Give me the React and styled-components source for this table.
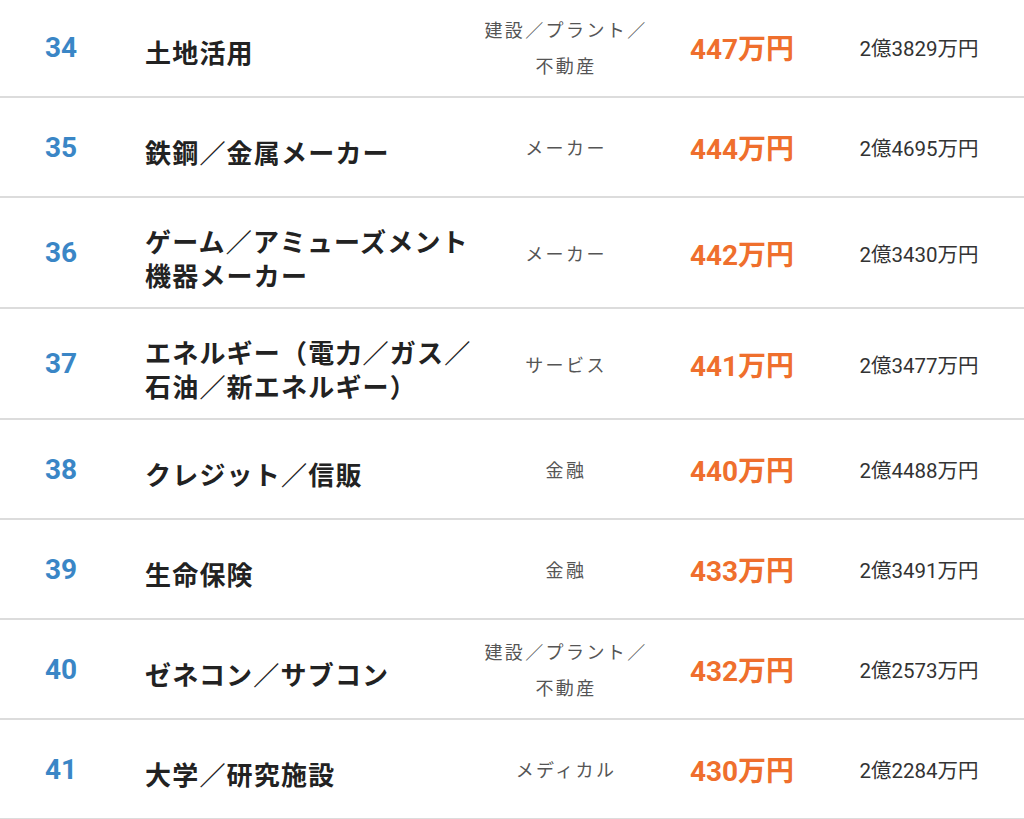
import styled, { createGlobalStyle } from 'styled-components';

const GlobalStyle = createGlobalStyle`
  html, body {
    margin: 0;
    padding: 0;
    background: #fff;
  }
  body {
    font-family: Roboto, "Noto Sans CJK JP", sans-serif;
    color: #222;
  }
`;

const Table = styled.div`
  width: 1024px;
  margin-top: -2px;
`;

const Row = styled.div`
  display: grid;
  grid-template-columns: 122px 358px 172px 180px 174px 18px;
  align-items: center;
  box-sizing: border-box;
  min-height: 100px;
  border-bottom: 2px solid #dcdcdc;
`;

const Rank = styled.div`
  text-align: center;
  font-family: Roboto, "Noto Sans CJK JP", sans-serif;
  font-size: 28px;
  font-weight: 700;
  color: #3a86c6;
`;

const Name = styled.div`
  padding: 25.5px 0 15.5px 23px;
  font-family: "Noto Sans CJK JP", sans-serif;
  font-size: 26px;
  line-height: 34px;
  font-weight: 700;
  letter-spacing: 1.2px;
  color: #222;
`;

const Category = styled.div`
  text-align: center;
  font-family: "Noto Sans CJK JP", sans-serif;
  font-size: 18px;
  line-height: 36px;
  letter-spacing: 2.4px;
  color: #555;
`;

const Salary = styled.div`
  text-align: center;
  font-family: Roboto, "Noto Sans CJK JP", sans-serif;
  font-size: 28px;
  font-weight: 700;
  color: #ef6f2d;
`;

const Lifetime = styled.div`
  text-align: center;
  font-family: Roboto, "Noto Sans CJK JP", sans-serif;
  font-size: 20.5px;
  color: #333;
`;

const rows = [
  { rank: 34, name: '土地活用', category: '建設／プラント／不動産', salary: '447万円', total: '2億3829万円' },
  { rank: 35, name: '鉄鋼／金属メーカー', category: 'メーカー', salary: '444万円', total: '2億4695万円' },
  { rank: 36, name: 'ゲーム／アミューズメント機器メーカー', category: 'メーカー', salary: '442万円', total: '2億3430万円' },
  { rank: 37, name: 'エネルギー（電力／ガス／石油／新エネルギー）', category: 'サービス', salary: '441万円', total: '2億3477万円' },
  { rank: 38, name: 'クレジット／信販', category: '金融', salary: '440万円', total: '2億4488万円' },
  { rank: 39, name: '生命保険', category: '金融', salary: '433万円', total: '2億3491万円' },
  { rank: 40, name: 'ゼネコン／サブコン', category: '建設／プラント／不動産', salary: '432万円', total: '2億2573万円' },
  { rank: 41, name: '大学／研究施設', category: 'メディカル', salary: '430万円', total: '2億2284万円' },
];

export default function App() {
  return (
    <>
      <GlobalStyle />
      <Table>
        {rows.map((r) => (
          <Row key={r.rank}>
            <Rank>{r.rank}</Rank>
            <Name>{r.name}</Name>
            <Category>{r.category}</Category>
            <Salary>{r.salary}</Salary>
            <Lifetime>{r.total}</Lifetime>
            <div />
          </Row>
        ))}
      </Table>
    </>
  );
}
